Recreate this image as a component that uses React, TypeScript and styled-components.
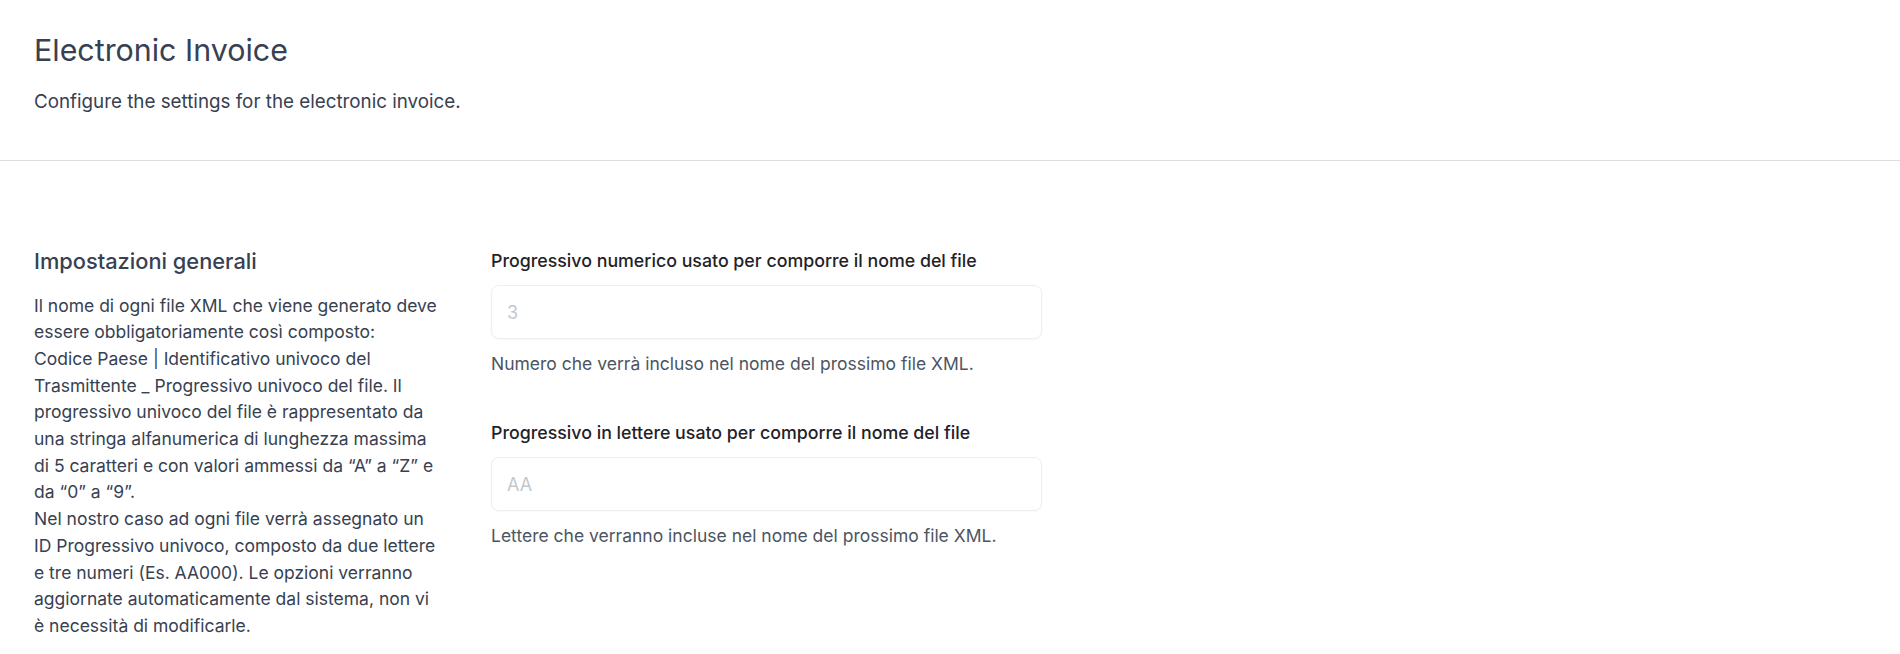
import React from "react";
import styled, { createGlobalStyle } from "styled-components";

const GlobalStyle = createGlobalStyle`
  html, body {
    margin: 0;
    padding: 0;
    background: #ffffff;
  }
  body {
    font-family: Inter, "Noto Sans", "Liberation Sans", sans-serif;
    -webkit-font-smoothing: antialiased;
  }
  * { box-sizing: border-box; }
`;

const Page = styled.div`
  width: 100%;
  min-height: 654px;
  background: #ffffff;
`;

const Header = styled.header`
  padding: 34px 34px 45px;
  border-bottom: 1px solid #dcdee2;
`;

const Title = styled.h1`
  margin: 0;
  font-size: 30.4px;
  line-height: 32px;
  font-weight: 400;
  color: #374151;
`;

const Subtitle = styled.p`
  margin: 23px 0 0;
  font-size: 18.8px;
  line-height: 26px;
  font-weight: 400;
  color: #374151;
`;

const Section = styled.section`
  display: grid;
  grid-template-columns: 407px 551px;
  column-gap: 50px;
  padding: 86px 34px 0;
`;

const Aside = styled.div`
  display: flex;
  flex-direction: column;
  gap: 17.5px;
`;

const SectionTitle = styled.h2`
  margin: 0;
  font-size: 21.8px;
  line-height: 28px;
  font-weight: 500;
  color: #374151;
`;

const Description = styled.p`
  margin: 0;
  font-size: 17.5px;
  line-height: 26.7px;
  color: #374151;
`;

const Fields = styled.div`
  display: flex;
  flex-direction: column;
  gap: 45px;
  padding-top: 2px;
`;

const Field = styled.div`
  display: flex;
  flex-direction: column;
`;

const Label = styled.label`
  font-size: 17.8px;
  line-height: 24px;
  font-weight: 500;
  color: #1f2328;
`;

const Input = styled.input`
  margin-top: 12px;
  width: 100%;
  height: 54px;
  padding: 0 15px;
  border: 1px solid #eceef1;
  border-radius: 8px;
  background: #ffffff;
  box-shadow: 0 1px 2px rgba(0, 0, 0, 0.03);
  font-family: inherit;
  font-size: 18px;
  color: #374151;
  outline: none;

  &::placeholder {
    color: #c3c7cd;
  }
`;

const Help = styled.p`
  margin: 13px 0 0;
  font-size: 17.5px;
  line-height: 24px;
  color: #4b5563;
`;

export default function App() {
  return (
    <Page>
      <GlobalStyle />
      <Header>
        <Title>Electronic Invoice</Title>
        <Subtitle>Configure the settings for the electronic invoice.</Subtitle>
      </Header>
      <Section>
        <Aside>
          <SectionTitle>Impostazioni generali</SectionTitle>
          <Description>
            Il nome di ogni file XML che viene generato deve essere
            obbligatoriamente così composto:
            <br />
            Codice Paese | Identificativo univoco del Trasmittente _ Progressivo
            univoco del file. Il progressivo univoco del file è rappresentato da
            una stringa alfanumerica di lunghezza massima di 5 caratteri e con
            valori ammessi da “A” a “Z” e da “0” a “9”.
            <br />
            Nel nostro caso ad ogni file verrà assegnato un ID Progressivo
            univoco, composto da due lettere e tre numeri (Es. AA000). Le
            opzioni verranno aggiornate automaticamente dal sistema, non vi è
            necessità di modificarle.
          </Description>
        </Aside>
        <Fields>
          <Field>
            <Label htmlFor="progressivo-numerico">
              Progressivo numerico usato per comporre il nome del file
            </Label>
            <Input id="progressivo-numerico" type="text" placeholder="3" />
            <Help>Numero che verrà incluso nel nome del prossimo file XML.</Help>
          </Field>
          <Field>
            <Label htmlFor="progressivo-lettere">
              Progressivo in lettere usato per comporre il nome del file
            </Label>
            <Input id="progressivo-lettere" type="text" placeholder="AA" />
            <Help>Lettere che verranno incluse nel nome del prossimo file XML.</Help>
          </Field>
        </Fields>
      </Section>
    </Page>
  );
}
